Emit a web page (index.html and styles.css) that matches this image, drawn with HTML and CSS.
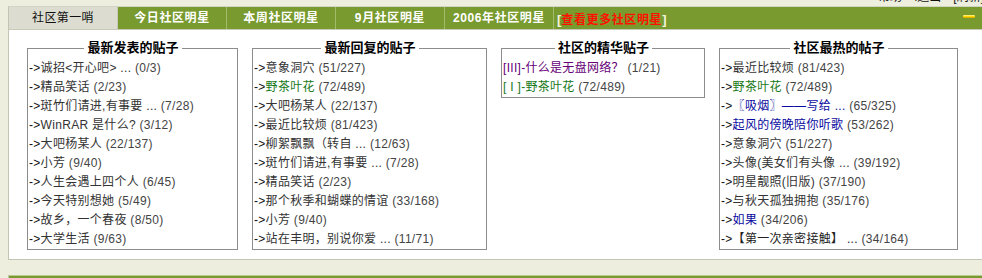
FILE: index.html
```html
<!DOCTYPE html>
<html lang="zh-CN">
<head>
<meta charset="utf-8">
<title>社区第一哨</title>
<link rel="stylesheet" href="styles.css">
</head>
<body>
<div class="topline"><span>帮助 〈退出　[刷新]</span></div>
<div class="frame">
  <div class="tabs">
    <div class="tab tab-first">社区第一哨</div>
    <div class="tab">今日社区明星</div>
    <div class="tab">本周社区明星</div>
    <div class="tab">9月社区明星</div>
    <div class="tab">2006年社区明星</div>
    <div class="more">[<span class="more-link">查看更多社区明星</span>]</div>
    <div class="spacer"></div>
    <span class="minus"></span>
  </div>
  <div class="content">
    <div class="boxes">
      <fieldset class="box">
        <legend align="center">最新发表的贴子</legend>
        <ul>
          <li><b>-&gt;</b><a>诚招&lt;开心吧&gt; ...</a> <i>(0/3)</i></li>
          <li><b>-&gt;</b><a>精品笑话</a> <i>(2/23)</i></li>
          <li><b>-&gt;</b><a>斑竹们请进,有事要 ...</a> <i>(7/28)</i></li>
          <li><b>-&gt;</b><a>WinRAR 是什么?</a> <i>(3/12)</i></li>
          <li><b>-&gt;</b><a>大吧杨某人</a> <i>(22/137)</i></li>
          <li><b>-&gt;</b><a>小芳</a> <i>(9/40)</i></li>
          <li><b>-&gt;</b><a>人生会遇上四个人</a> <i>(6/45)</i></li>
          <li><b>-&gt;</b><a>今天特别想她</a> <i>(5/49)</i></li>
          <li><b>-&gt;</b><a>故乡，一个春夜</a> <i>(8/50)</i></li>
          <li><b>-&gt;</b><a>大学生活</a> <i>(9/63)</i></li>
        </ul>
      </fieldset>
      <fieldset class="box">
        <legend align="center">最新回复的贴子</legend>
        <ul>
          <li><b>-&gt;</b><a>意象洞穴</a> <i>(51/227)</i></li>
          <li><b>-&gt;</b><a class="green">野茶叶花</a> <i>(72/489)</i></li>
          <li><b>-&gt;</b><a>大吧杨某人</a> <i>(22/137)</i></li>
          <li><b>-&gt;</b><a>最近比较烦</a> <i>(81/423)</i></li>
          <li><b>-&gt;</b><a>柳絮飘飘（转自 ...</a> <i>(12/63)</i></li>
          <li><b>-&gt;</b><a>斑竹们请进,有事要 ...</a> <i>(7/28)</i></li>
          <li><b>-&gt;</b><a>精品笑话</a> <i>(2/23)</i></li>
          <li><b>-&gt;</b><a>那个秋季和蝴蝶的情谊</a> <i>(33/168)</i></li>
          <li><b>-&gt;</b><a>小芳</a> <i>(9/40)</i></li>
          <li><b>-&gt;</b><a>站在丰明，别说你爱 ...</a> <i>(11/71)</i></li>
        </ul>
      </fieldset>
      <fieldset class="box">
        <legend align="center">社区的精华贴子</legend>
        <ul>
          <li><a class="purple">[III]-什么是无盘网络？</a> <i>(1/21)</i></li>
          <li><a class="green">[ I ]-野茶叶花</a> <i>(72/489)</i></li>
        </ul>
      </fieldset>
      <fieldset class="box">
        <legend align="center">社区最热的帖子</legend>
        <ul>
          <li><b>-&gt;</b><a>最近比较烦</a> <i>(81/423)</i></li>
          <li><b>-&gt;</b><a class="green">野茶叶花</a> <i>(72/489)</i></li>
          <li><b>-&gt;</b><a class="blue">〖吸烟〗——写给 ...</a> <i>(65/325)</i></li>
          <li><b>-&gt;</b><a class="blue">起风的傍晚陪你听歌</a> <i>(53/262)</i></li>
          <li><b>-&gt;</b><a>意象洞穴</a> <i>(51/227)</i></li>
          <li><b>-&gt;</b><a>头像(美女们有头像 ...</a> <i>(39/192)</i></li>
          <li><b>-&gt;</b><a>明星靓照(旧版)</a> <i>(37/190)</i></li>
          <li><b>-&gt;</b><a>与秋天孤独拥抱</a> <i>(35/176)</i></li>
          <li><b>-&gt;</b><a class="blue">如果</a> <i>(34/206)</i></li>
          <li><b>-&gt;</b><a class="dark">【第一次亲密接触】 ...</a> <i>(34/164)</i></li>
        </ul>
      </fieldset>
    </div>
  </div>
</div>
<div class="frame frame-next">
  <div class="tabs tabs-next"></div>
</div>
</body>
</html>
```

FILE: styles.css
```css
html, body {
  margin: 0;
  padding: 0;
}
body {
  background: #eeeedf;
  font-family: "Liberation Sans", "Noto Sans CJK SC", sans-serif;
  font-size: 12px;
  color: #333;
  overflow: hidden;
}
.topline {
  height: 6px;
  overflow: hidden;
  padding-left: 878px;
  white-space: nowrap;
}
.topline span {
  display: block;
  margin-top: -9px;
  line-height: 12px;
  color: #111;
}
.frame {
  margin-left: 8px;
  border-left: 1px solid #c4c4b4;
  border-top: 1px solid #d4d4c6;
}
.tabs {
  display: flex;
  align-items: center;
  height: 22px;
  background: #789a2e;
  border-bottom: 1px solid #c8c8b8;
}
.tab {
  width: 108px;
  height: 22px;
  line-height: 22px;
  text-align: center;
  color: #fff;
  font-weight: bold;
  letter-spacing: 0.6px;
  border-right: 1px solid #a3bc6c;
  white-space: nowrap;
}
.tab-first {
  background: #dcdcd0;
  color: #111;
  font-weight: normal;
  letter-spacing: 0.4px;
  border-right: 1px solid #c8c8b8;
}
.more {
  padding-left: 3px;
  color: #f4f4dc;
  font-weight: bold;
  font-size: 13px;
  white-space: nowrap;
}
.more-link {
  color: #ff1100;
  font-size: 12px;
  letter-spacing: 0.6px;
}
.spacer {
  flex: 1;
}
.minus {
  width: 12px;
  height: 3px;
  margin-right: 7px;
  margin-top: -4px;
  border-radius: 1px;
  background: linear-gradient(#fff7a0, #ffd800 50%, #d09a00);
}
.content {
  background: #fff;
  height: 219px;
  padding: 10px 0 0 18px;
  border-bottom: 1px solid #c4c4b4;
}
.boxes {
  display: grid;
  grid-template-columns: 211px 235px 204px 239px;
  column-gap: 14px;
  align-items: start;
}
.box {
  box-sizing: border-box;
  width: 100%;
  min-width: 0;
  margin: 0;
  padding: 0 0 0 1px;
  border: 1px solid #8c8c8c;
}
.box legend {
  margin: 0 auto;
  padding: 0 3px;
  line-height: 16px;
  font-size: 13px;
  font-weight: bold;
  color: #000;
}
.box ul {
  list-style: none;
  margin: 0;
  padding: 3px 0 0 0;
}
.box li {
  line-height: 19px;
  height: 19px;
  white-space: nowrap;
  overflow: hidden;
  letter-spacing: 0.3px;
}
.box b {
  font-weight: normal;
  color: #111;
}
.box a {
  color: #333;
}
.box i {
  font-style: normal;
  color: #444;
}
.box a.green {
  color: #1a7a1a;
}
.box a.purple {
  color: #660077;
}
.box a.blue {
  color: #0a0aa0;
}
.box a.dark {
  color: #222;
}
.frame-next {
  margin-top: 15px;
  border-top-color: #b8c890;
}
.tabs-next {
  border-bottom: none;
}
```
